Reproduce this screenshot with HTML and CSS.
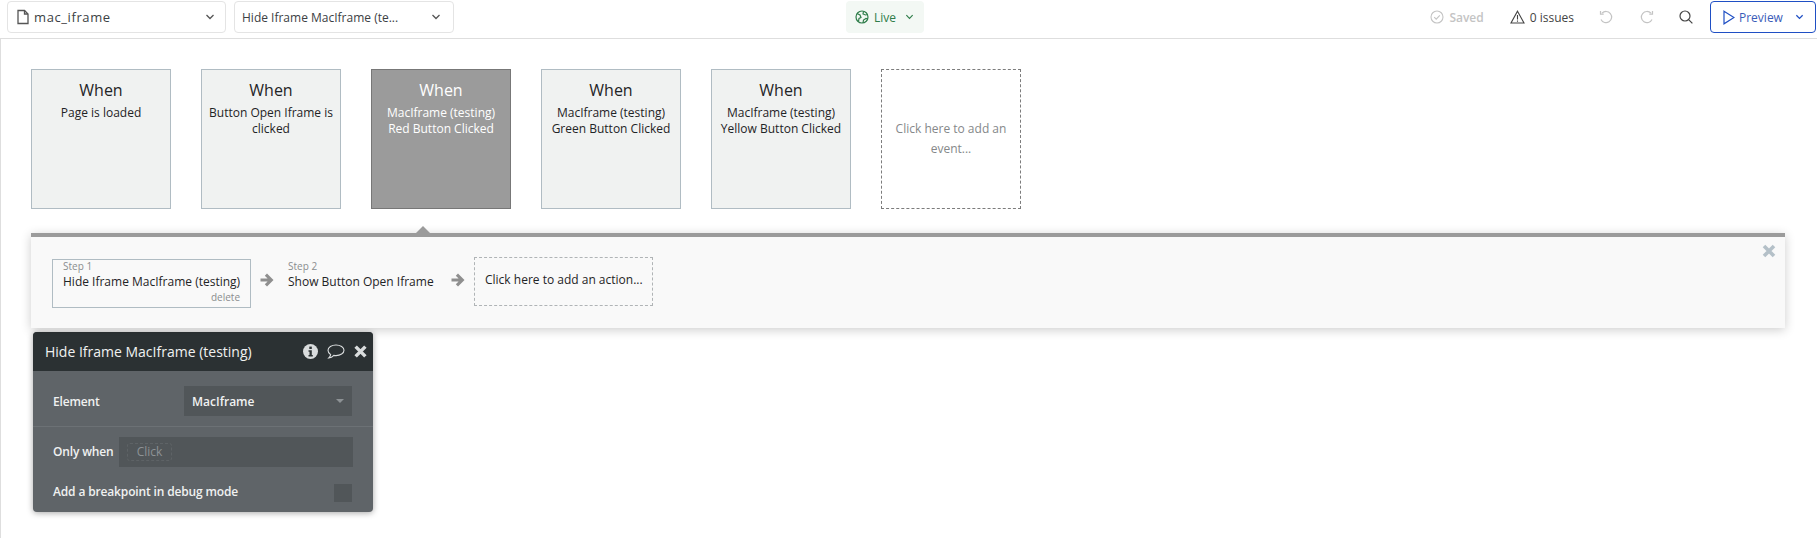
FILE: index.html
```html
<!DOCTYPE html>
<html lang="en">
<head>
    <meta charset="UTF-8">
    <meta name="viewport" content="width=device-width, initial-scale=1.0">
    <title>mac_iframe workflow</title>
    <link rel="stylesheet" href="styles.css">
</head>
<body>

    <!-- Top toolbar -->
    <header class="toolbar">
        <div class="select page-select">
            <svg class="file-icon" width="14" height="16" viewBox="0 0 14 16" fill="none" stroke="#555" stroke-width="1.3"><path d="M2 1.5h6.5l3.5 3.5v9.5H2z"/><path d="M8.5 1.5V5H12"/></svg>
            <span class="select-label">mac_iframe</span>
            <svg class="chevron" width="10" height="6" viewBox="0 0 10 6" fill="none" stroke="#555" stroke-width="1.3"><path d="M1.5 1l3.5 3.5L8.5 1"/></svg>
        </div>
        <div class="select action-select">
            <span class="select-label">Hide Iframe MacIframe (te...</span>
            <svg class="chevron" width="10" height="6" viewBox="0 0 10 6" fill="none" stroke="#555" stroke-width="1.3"><path d="M1.5 1l3.5 3.5L8.5 1"/></svg>
        </div>
        <div class="live">
            <svg width="14" height="14" viewBox="0 0 14 14" fill="none" stroke="#2f7d4a" stroke-width="1.2"><circle cx="7" cy="7" r="6"/><path d="M2 3.5l3 1.5 1 2.5-2 1-.5 3M8.5 1.5L8 4l2.5 1 2.5-.5M8 13l.5-3L11 8.5l2 .5"/></svg>
            <span>Live</span>
            <svg width="9" height="6" viewBox="0 0 10 6" fill="none" stroke="#2f7d4a" stroke-width="1.3"><path d="M1.5 1l3.5 3.5L8.5 1"/></svg>
        </div>
        <div class="toolbar-right">
            <div class="status saved">
                <svg width="14" height="14" viewBox="0 0 14 14" fill="none" stroke="#c4c4c4" stroke-width="1.1"><circle cx="7" cy="7" r="6"/><path d="M4.2 7.2l2 2 3.6-3.8"/></svg>
                <span>Saved</span>
            </div>
            <div class="status issues">
                <svg width="15" height="14" viewBox="0 0 15 14" fill="none" stroke="#444" stroke-width="1.1"><path d="M7.5 1.2L14 13H1z"/><path d="M7.5 5v4.5M7.5 10.5v1.2"/></svg>
                <span>0 issues</span>
            </div>
            <svg class="tool-icon undo" width="14" height="14" viewBox="0 0 14 14" fill="none" stroke="#c4c4c4" stroke-width="1.2"><path d="M3 3.2A5.6 5.6 0 1 1 2 9.5"/><path d="M1.5 1v3.2h3.2"/></svg>
            <svg class="tool-icon redo" width="14" height="14" viewBox="0 0 14 14" fill="none" stroke="#c4c4c4" stroke-width="1.2"><path d="M11 3.2A5.6 5.6 0 1 0 12 9.5"/><path d="M12.5 1v3.2H9.3"/></svg>
            <svg class="tool-icon search" width="14" height="14" viewBox="0 0 14 14" fill="none" stroke="#444" stroke-width="1.2"><circle cx="6" cy="6" r="5"/><path d="M9.6 9.6L13.4 13.4"/></svg>
            <div class="preview">
                <svg width="12" height="15" viewBox="0 0 12 15" fill="none" stroke="#1f4fc4" stroke-width="1.2"><path d="M1 1.2L11 7.5 1 13.8z"/></svg>
                <span>Preview</span>
                <svg class="preview-chevron" width="9" height="6" viewBox="0 0 10 6" fill="none" stroke="#1f4fc4" stroke-width="1.4"><path d="M1.5 1l3.5 3.5L8.5 1"/></svg>
            </div>
        </div>
    </header>

    <main class="canvas">
        <!-- Event cards -->
        <div class="events">
            <div class="event">
                <div class="event-title">When</div>
                <div class="event-text">Page is loaded</div>
            </div>
            <div class="event">
                <div class="event-title">When</div>
                <div class="event-text">Button Open Iframe is clicked</div>
            </div>
            <div class="event selected">
                <div class="event-title">When</div>
                <div class="event-text">MacIframe (testing) Red Button Clicked</div>
            </div>
            <div class="event">
                <div class="event-title">When</div>
                <div class="event-text">MacIframe (testing) Green Button Clicked</div>
            </div>
            <div class="event">
                <div class="event-title">When</div>
                <div class="event-text">MacIframe (testing) Yellow Button Clicked</div>
            </div>
            <div class="event add-event">Click here to add an event...</div>
        </div>

        <!-- Action steps -->
        <section class="steps">
            <div class="step active">
                <div class="step-num">Step 1</div>
                <div class="step-name">Hide Iframe MacIframe (testing)</div>
                <div class="step-delete">delete</div>
            </div>
            <svg class="arrow" width="14" height="14" viewBox="0 0 14 14" fill="#8f8f8f"><path d="M7 .5L13.500 7 7 13.500l-2.200-2.200 2.800-2.800H.5v-3h7.100L4.800 2.700z"/></svg>
            <div class="step plain">
                <div class="step-num">Step 2</div>
                <div class="step-name">Show Button Open Iframe</div>
            </div>
            <svg class="arrow" width="14" height="14" viewBox="0 0 14 14" fill="#8f8f8f"><path d="M7 .5L13.500 7 7 13.500l-2.200-2.200 2.800-2.800H.5v-3h7.100L4.800 2.700z"/></svg>
            <div class="add-action">Click here to add an action...</div>
            <svg class="steps-close" width="14" height="14" viewBox="0 0 14 14" fill="none" stroke="#b4c0c8" stroke-width="3.600"><path d="M2 2l10 10M12 2L2 12"/></svg>
        </section>

        <!-- Property editor -->
        <section class="editor">
            <div class="editor-head">
                <span class="editor-title">Hide Iframe MacIframe (testing)</span>
                <svg width="15" height="15" viewBox="0 0 15 15"><circle cx="7.500" cy="7.500" r="7.500" fill="#d9dcdd"/><rect x="6.300" y="2.600" width="2.500" height="2.400" fill="#2b3133"/><path d="M5.500 6.300h3.300v4.600h1v1.500H5.500v-1.500h1V7.800h-1z" fill="#2b3133"/></svg>
                <svg class="comment-icon" width="18" height="15" viewBox="0 0 18 15" fill="none" stroke="#d9dcdd" stroke-width="1.100"><path d="M9 1c4.400 0 8 2.400 8 5.300s-3.600 5.300-8 5.300c-.8 0-1.500-.1-2.200-.2C5.500 12.800 3.800 13.800 1.800 14c1-1 1.700-2 1.900-3.300C2 9.700 1 8.100 1 6.300 1 3.400 4.600 1 9 1z"/></svg>
                <svg width="13" height="13" viewBox="0 0 12 12" fill="none" stroke="#d9dcdd" stroke-width="3.200"><path d="M1.500 1.500l9 9M10.500 1.500l-9 9"/></svg>
            </div>
            <div class="editor-row element-row">
                <span class="row-label">Element</span>
                <div class="dropdown">
                    <span>MacIframe</span>
                    <i class="caret"></i>
                </div>
            </div>
            <div class="editor-row when-row">
                <span class="row-label">Only when</span>
                <div class="when-input"><span class="click-tag">Click</span></div>
            </div>
            <div class="editor-row debug-row">
                <span class="row-label">Add a breakpoint in debug mode</span>
                <i class="checkbox"></i>
            </div>
        </section>
    </main>

</body>
</html>
```

FILE: styles.css
```css
* {
    box-sizing: border-box;
}

body {
    margin: 0;
    height: 538px;
    overflow: hidden;
    background: #fff;
    font-family: "Open Sans", sans-serif;
    font-size: 12px;
    color: #1f2426;
    display: flex;
    flex-direction: column;
}

/* Top toolbar */
.toolbar {
    height: 39px;
    flex-shrink: 0;
    display: flex;
    align-items: flex-start;
    padding: 1px 1px 0 7px;
    border-bottom: 1px solid #dedede;
}

.select {
    height: 32px;
    display: flex;
    align-items: center;
    border: 1px solid #e4e4e4;
    border-radius: 4px;
    color: #3c4144;
}

.page-select {
    width: 219px;
    margin-right: 8px;
    padding: 0 10px 0 8px;
    font-size: 13px;
    letter-spacing: 0.6px;
}

.file-icon {
    margin-right: 4px;
}

.action-select {
    width: 220px;
    padding: 0 12px 0 7px;
    font-size: 12px;
}

.chevron {
    margin-left: auto;
}

.live {
    margin-left: 392px;
    width: 78px;
    height: 32px;
    display: flex;
    align-items: center;
    gap: 5px;
    padding-left: 9px;
    background: #f3f8f4;
    border-radius: 4px;
    font-size: 12px;
    color: #2f7d4a;
}

.live svg:last-child {
    margin-left: 4px;
}

.toolbar-right {
    margin-left: auto;
    display: flex;
    align-items: center;
    height: 32px;
}

.status {
    display: flex;
    align-items: center;
    gap: 5px;
    font-size: 12px;
}

.saved {
    color: #c4c4c4;
    font-weight: 600;
    margin-right: 26px;
}

.issues {
    color: #444;
    margin-right: 25px;
}

.undo {
    margin-right: 27px;
}

.redo {
    margin-right: 25px;
}

.search {
    margin-right: 17px;
}

.preview {
    width: 106px;
    height: 32px;
    display: flex;
    align-items: center;
    gap: 4px;
    padding-left: 12px;
    border: 1px solid #1f4fc4;
    border-radius: 4px;
    font-size: 12px;
    color: #3a5cb8;
}

.preview-chevron {
    margin-left: 8px;
}

/* Canvas */
.canvas {
    flex: 1;
    border-left: 1px solid #dedede;
    padding: 30px 32px 0 30px;
}

.events {
    display: flex;
    gap: 30px;
    height: 140px;
}

.event {
    width: 140px;
    height: 140px;
    padding: 9px 6px 0;
    border: 1px solid #b0bcc3;
    background: #f0f2f1;
    text-align: center;
}

.event-title {
    font-size: 16px;
    line-height: 22px;
    margin-bottom: 4px;
}

.event-text {
    font-size: 12px;
    line-height: 16px;
}

.selected {
    background: #9b9b9b;
    border-color: #777;
    color: #fff;
}

.add-event {
    display: flex;
    align-items: center;
    justify-content: center;
    padding: 0 10px;
    border: 1px dashed #7c7c7c;
    background: #fff;
    color: #85888a;
    line-height: 20px;
}

/* Action steps */
.steps {
    position: relative;
    height: 95px;
    margin-top: 24px;
    display: flex;
    align-items: flex-start;
    padding: 22px 0 0 21px;
    background: #f9f9f9;
    border-top: 4px solid #9b9b9b;
    box-shadow: 0 2px 10px rgba(0, 0, 0, 0.2);
}

/* little notch pointing at the selected event */
.steps::before {
    content: "";
    position: absolute;
    left: 385px;
    top: -11px;
    border-left: 7px solid transparent;
    border-right: 7px solid transparent;
    border-bottom: 7px solid #9b9b9b;
}

.step {
    height: 49px;
    padding: 0 10px;
    position: relative;
}

.step.active {
    width: 199px;
    border: 1px solid #b0bcc3;
}

.step.plain {
    width: 175px;
    padding: 1px 0 0;
}

.step-num {
    font-size: 10px;
    line-height: 13px;
    color: #8a8d8f;
}

.step-name {
    font-size: 12px;
    line-height: 17px;
    white-space: nowrap;
}

.step-delete {
    font-size: 10px;
    line-height: 14px;
    text-align: right;
    color: #8a8d8f;
}

.arrow {
    margin: 14px 0 0 9px;
    flex-shrink: 0;
}

.step.active + .arrow {
    margin-right: 14px;
}

.step.plain + .arrow {
    margin: 14px 9px 0 -12px;
}

.add-action {
    margin-top: -2px;
    width: 179px;
    height: 49px;
    display: flex;
    align-items: center;
    padding: 0 0 4px 10px;
    border: 1px dashed #b0b4b6;
    white-space: nowrap;
}

.steps-close {
    position: absolute;
    right: 9px;
    top: 7px;
}

/* Property editor */
.editor {
    width: 340px;
    height: 180px;
    margin: 4px 0 0 2px;
    background: #5f6468;
    border-radius: 4px;
    box-shadow: 0 1px 6px rgba(0, 0, 0, 0.35);
    color: #f0f1f1;
    font-size: 12px;
    font-weight: 600;
    overflow: hidden;
}

.editor-head {
    height: 39px;
    display: flex;
    align-items: center;
    padding: 0 6px 0 12px;
    background: #2b3133;
}

.editor-title {
    font-size: 14px;
    font-weight: 400;
    margin-right: auto;
}

.comment-icon {
    margin: 0 9px;
}

.editor-row {
    display: flex;
    align-items: center;
    padding-left: 20px;
}

.row-label {
    letter-spacing: -0.15px;
}

.element-row {
    height: 56px;
    padding-top: 5px;
    border-bottom: 1px solid #6c7175;
}

.dropdown {
    width: 168px;
    height: 30px;
    margin-left: auto;
    margin-right: 21px;
    display: flex;
    align-items: center;
    justify-content: space-between;
    padding: 0 8px;
    background: #515659;
}

.caret {
    border-left: 4px solid transparent;
    border-right: 4px solid transparent;
    border-top: 4px solid #8d9295;
}

.when-row {
    height: 50px;
}

.when-row .row-label {
    margin-bottom: 2px;
}

.when-input {
    width: 234px;
    height: 30px;
    margin-left: auto;
    margin-right: 20px;
    display: flex;
    align-items: center;
    padding-left: 8px;
    background: #515659;
}

.click-tag {
    width: 45px;
    height: 18px;
    line-height: 16px;
    text-align: center;
    border: 1px dashed #5e6366;
    border-radius: 3px;
    color: #8d9295;
    font-weight: 400;
}

.debug-row {
    height: 32px;
}

.debug-row .row-label {
    margin-bottom: 3px;
}

.checkbox {
    width: 18px;
    height: 18px;
    margin-left: auto;
    margin-right: 21px;
    background: #515659;
}
```
